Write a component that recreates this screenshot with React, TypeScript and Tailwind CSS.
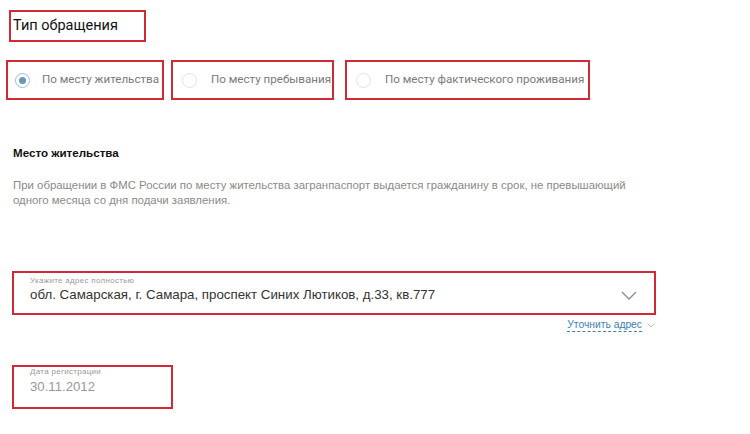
import React, { useState } from 'react';

const RED = 'border-[#cf2a35]';

function Radio({ label, checked, onClick, className }: { label: string; checked: boolean; onClick: () => void; className: string }) {
  return (
    <button
      onClick={onClick}
      className={`flex items-center h-10 border-2 ${RED} ${className}`}
    >
      <span
        className={`flex items-center justify-center w-[15px] h-[15px] rounded-full border ${
          checked ? 'border-[#9cc0d6]' : 'border-[#e3e3e3]'
        }`}
      >
        {checked && <span className="w-[7px] h-[7px] rounded-full bg-[#6c97b3]" />}
      </span>
      <span className="text-[11.6px] text-[#7a7a7a] font-['Roboto',sans-serif] whitespace-nowrap">{label}</span>
    </button>
  );
}

export default function App() {
  const [type, setType] = useState(0);

  return (
    <div className="w-[750px] h-[434px] bg-white overflow-hidden font-['Liberation_Sans',Arial,sans-serif]">
      {/* заголовок */}
      <div className={`ml-[9px] mt-[10px] w-[137px] h-[32px] border-2 ${RED} flex items-center pl-[2px]`}>
        <span className="text-[14.5px] text-[#111] font-['Roboto',sans-serif]">Тип обращения</span>
      </div>

      <div className="flex mt-[18px]">
        <Radio
          label="По месту жительства"
          checked={type === 0}
          onClick={() => setType(0)}
          className="ml-[6px] w-[158px] pl-[7px] gap-[12px]"
        />
        <Radio
          label="По месту пребывания"
          checked={type === 1}
          onClick={() => setType(1)}
          className="ml-[7px] w-[163px] pl-[9px] gap-[14px]"
        />
        <Radio
          label="По месту фактического проживания"
          checked={type === 2}
          onClick={() => setType(2)}
          className="ml-[11px] w-[245px] pl-[9px] gap-[14px]"
        />
      </div>

      <div className="ml-[13px] mt-[45px] text-[11.6px] leading-[15px] font-bold text-[#111]">Место жительства</div>

      <p className="ml-[13px] mt-[18px] w-[630px] text-[11.4px] leading-[15px] text-[#8a8a8a]">
        При обращении в ФМС России по месту жительства загранпаспорт выдается гражданину в срок, не превышающий
        одного месяца со дня подачи заявления.
      </p>

      {/* адрес */}
      <div className={`ml-[12px] mt-[63px] w-[644px] h-[44px] border-2 ${RED} flex items-start pt-[3px] pl-[16px] pr-[17px]`}>
        <div className="flex-1 flex flex-col">
          <span className="text-[8px] leading-[9px] text-[#999] tracking-[0.3px]">Укажите адрес полностью</span>
          <span className="mt-[2px] text-[13.3px] leading-[16px] text-[#333]">
            обл. Самарская, г. Самара, проспект Синих Лютиков, д.33, кв.777
          </span>
        </div>
        <svg width="16" height="9" viewBox="0 0 16 9" fill="none" className="mt-[15px]">
          <path d="M1 1l7 7 7-7" stroke="#8c8c8c" strokeWidth="1.3" />
        </svg>
      </div>

      <div className="flex justify-end items-center w-[656px] mt-[3px] h-[14px]">
        <span className="text-[10.3px] leading-[12px] text-[#3a7fb0] border-b border-dashed border-[#3a7fb0]">
          Уточнить адрес
        </span>
        <svg width="8" height="5" viewBox="0 0 8 5" fill="none" className="ml-[5px] mr-[1px]">
          <path d="M0.5 0.5l3.5 3.5 3.5-3.5" stroke="#a9c4d8" strokeWidth="1" />
        </svg>
      </div>

      {/* дата */}
      <div className={`ml-[12px] mt-[33px] w-[161px] h-[44px] border-2 ${RED} flex flex-col pt-0 pl-[16px]`}>
        <span className="text-[8px] leading-[9px] text-[#999] tracking-[0.3px]">Дата регистрации</span>
        <span className="mt-[3px] text-[13.2px] leading-[16px] text-[#999]">30.11.2012</span>
      </div>
    </div>
  );
}
